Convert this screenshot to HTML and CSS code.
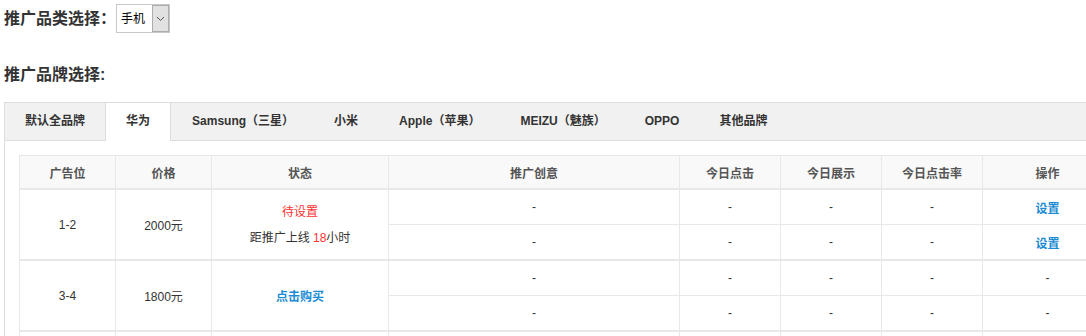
FILE: index.html
```html
<!DOCTYPE html>
<html>
<head>
  <meta charset="UTF-8">
  <title>推广品牌选择</title>
<link rel="stylesheet" href="styles.css">
</head>
<body>

  <div class="field">
    <span class="field-title">推广品类选择：</span>
    <span class="select">
      <select id="category">
        <option value="phone">手机</option>
        <option value="pad">平板</option>
      </select>
      <span class="select-arrow">
        <svg width="9" height="6" viewBox="0 0 9 6"><path d="M1 1 L4.5 4.5 L8 1" fill="none" stroke="#555" stroke-width="1"/></svg>
      </span>
    </span>
  </div>

  <div class="field-title brand-title">推广品牌选择:</div>

  <div class="tab-box">
    <ul class="tabs">
      <li>默认全品牌</li>
      <li class="active">华为</li>
      <li class="tab-samsung">Samsung（三星）</li>
      <li class="tab-mi">小米</li>
      <li class="tab-apple">Apple（苹果）</li>
      <li class="tab-meizu">MEIZU（魅族）</li>
      <li>OPPO</li>
      <li>其他品牌</li>
    </ul>

    <div class="tab-content">
      <table class="ad-table">
        <colgroup>
          <col style="width:96px">
          <col style="width:96px">
          <col style="width:177px">
          <col style="width:291px">
          <col style="width:101px">
          <col style="width:101px">
          <col style="width:101px">
          <col style="width:130px">
        </colgroup>
        <thead>
          <tr>
            <th>广告位</th>
            <th>价格</th>
            <th>状态</th>
            <th>推广创意</th>
            <th>今日点击</th>
            <th>今日展示</th>
            <th>今日点击率</th>
            <th>操作</th>
          </tr>
        </thead>
        <tbody>
          <!-- 1-2 -->
          <tr class="group-start">
            <td rowspan="2">1-2</td>
            <td rowspan="2">2000元</td>
            <td rowspan="2" class="status">
              <div class="red">待设置</div>
              <div>距推广上线 <span class="red">18</span>小时</div>
            </td>
            <td>-</td><td>-</td><td>-</td><td>-</td>
            <td><a class="link" href="#">设置</a></td>
          </tr>
          <tr>
            <td>-</td><td>-</td><td>-</td><td>-</td>
            <td><a class="link" href="#">设置</a></td>
          </tr>
          <!-- 3-4 -->
          <tr class="group-start">
            <td rowspan="2">3-4</td>
            <td rowspan="2">1800元</td>
            <td rowspan="2"><a class="link" href="#">点击购买</a></td>
            <td>-</td><td>-</td><td>-</td><td>-</td><td>-</td>
          </tr>
          <tr>
            <td>-</td><td>-</td><td>-</td><td>-</td><td>-</td>
          </tr>
          <!-- 5-6 -->
          <tr class="group-start">
            <td rowspan="2">5-6</td>
            <td rowspan="2">1600元</td>
            <td rowspan="2"><a class="link" href="#">点击购买</a></td>
            <td>-</td><td>-</td><td>-</td><td>-</td><td>-</td>
          </tr>
          <tr>
            <td>-</td><td>-</td><td>-</td><td>-</td><td>-</td>
          </tr>
        </tbody>
      </table>
    </div>
  </div>

</body>
</html>
```

FILE: styles.css
```css
html {
  overflow: hidden;
}
body {
  margin: 0;
  padding: 4px;
  font-family: "Liberation Sans", "Noto Sans CJK SC", sans-serif;
  font-size: 12px;
  color: #333;
  width: 1200px;
}
.field {
  display: flex;
  align-items: center;
  height: 29px;
}
.field-title {
  font-size: 16px;
  font-weight: bold;
  color: #333;
  line-height: 20px;
}
.brand-title {
  margin-top: 32px;
}
.select {
  display: flex;
  height: 29px;
  box-sizing: border-box;
  border: 1px solid #c8c8c8;
  background: white;
}
.select select {
  -webkit-appearance: none;
  appearance: none;
  border: none;
  background: white;
  font-family: "Liberation Sans", "Noto Sans CJK SC", sans-serif;
  font-size: 12px;
  color: #000;
  padding: 0 0 0 4px;
  width: 35px;
  outline: none;
}
.select-arrow {
  display: flex;
  align-items: center;
  justify-content: center;
  width: 15px;
  background: #e1e1e1;
  border: 1px solid #adadad;
}
.tab-box {
  margin-top: 17px;
  border-left: 1px solid #ddd;
  border-top: 1px solid #ddd;
}
.tabs {
  list-style: none;
  margin: 0;
  padding: 0;
  display: flex;
  background: #f1f1f1;
  border-bottom: 1px solid #ddd;
  height: 37px;
}
.tabs li {
  padding: 0 20px;
  line-height: 37px;
  font-weight: bold;
  font-size: 12px;
  color: #333;
  cursor: pointer;
}
.tabs li.tab-samsung { padding: 0 20px 0 21px; }
.tabs li.tab-mi { padding: 0 21px 0 20px; }
.tabs li.tab-apple { padding: 0 21px 0 20px; }
.tabs li.tab-meizu { padding: 0 19px; }
.tabs li.active {
  background: white;
  border-left: 1px solid #ddd;
  border-right: 1px solid #ddd;
  margin-bottom: -1px;
  height: 38px;
  box-sizing: border-box;
  padding: 0 20px;
}
.tab-content {
  padding: 14px 15px 15px 14px;
  background: white;
}
.ad-table {
  border-collapse: collapse;
  table-layout: fixed;
  width: 1093px;
}
.ad-table th {
  background: #f9f9f9;
  height: 32px;
  font-weight: bold;
  color: #555;
  border: 1px solid #e8e8e8;
  border-bottom: 2px solid #e8e8e8;
  padding: 0;
  font-size: 12px;
}
.ad-table td {
  height: 34px;
  padding: 0;
  text-align: center;
  border: 1px solid #e8e8e8;
  color: #333;
  font-size: 12px;
}
.ad-table tr.group-start td {
  border-top: 2px solid #e8e8e8;
}
.status div {
  line-height: 26px;
}
.red {
  color: #ff3333;
}
.link {
  color: #1a8bd4;
  font-weight: bold;
  text-decoration: none;
}
```
